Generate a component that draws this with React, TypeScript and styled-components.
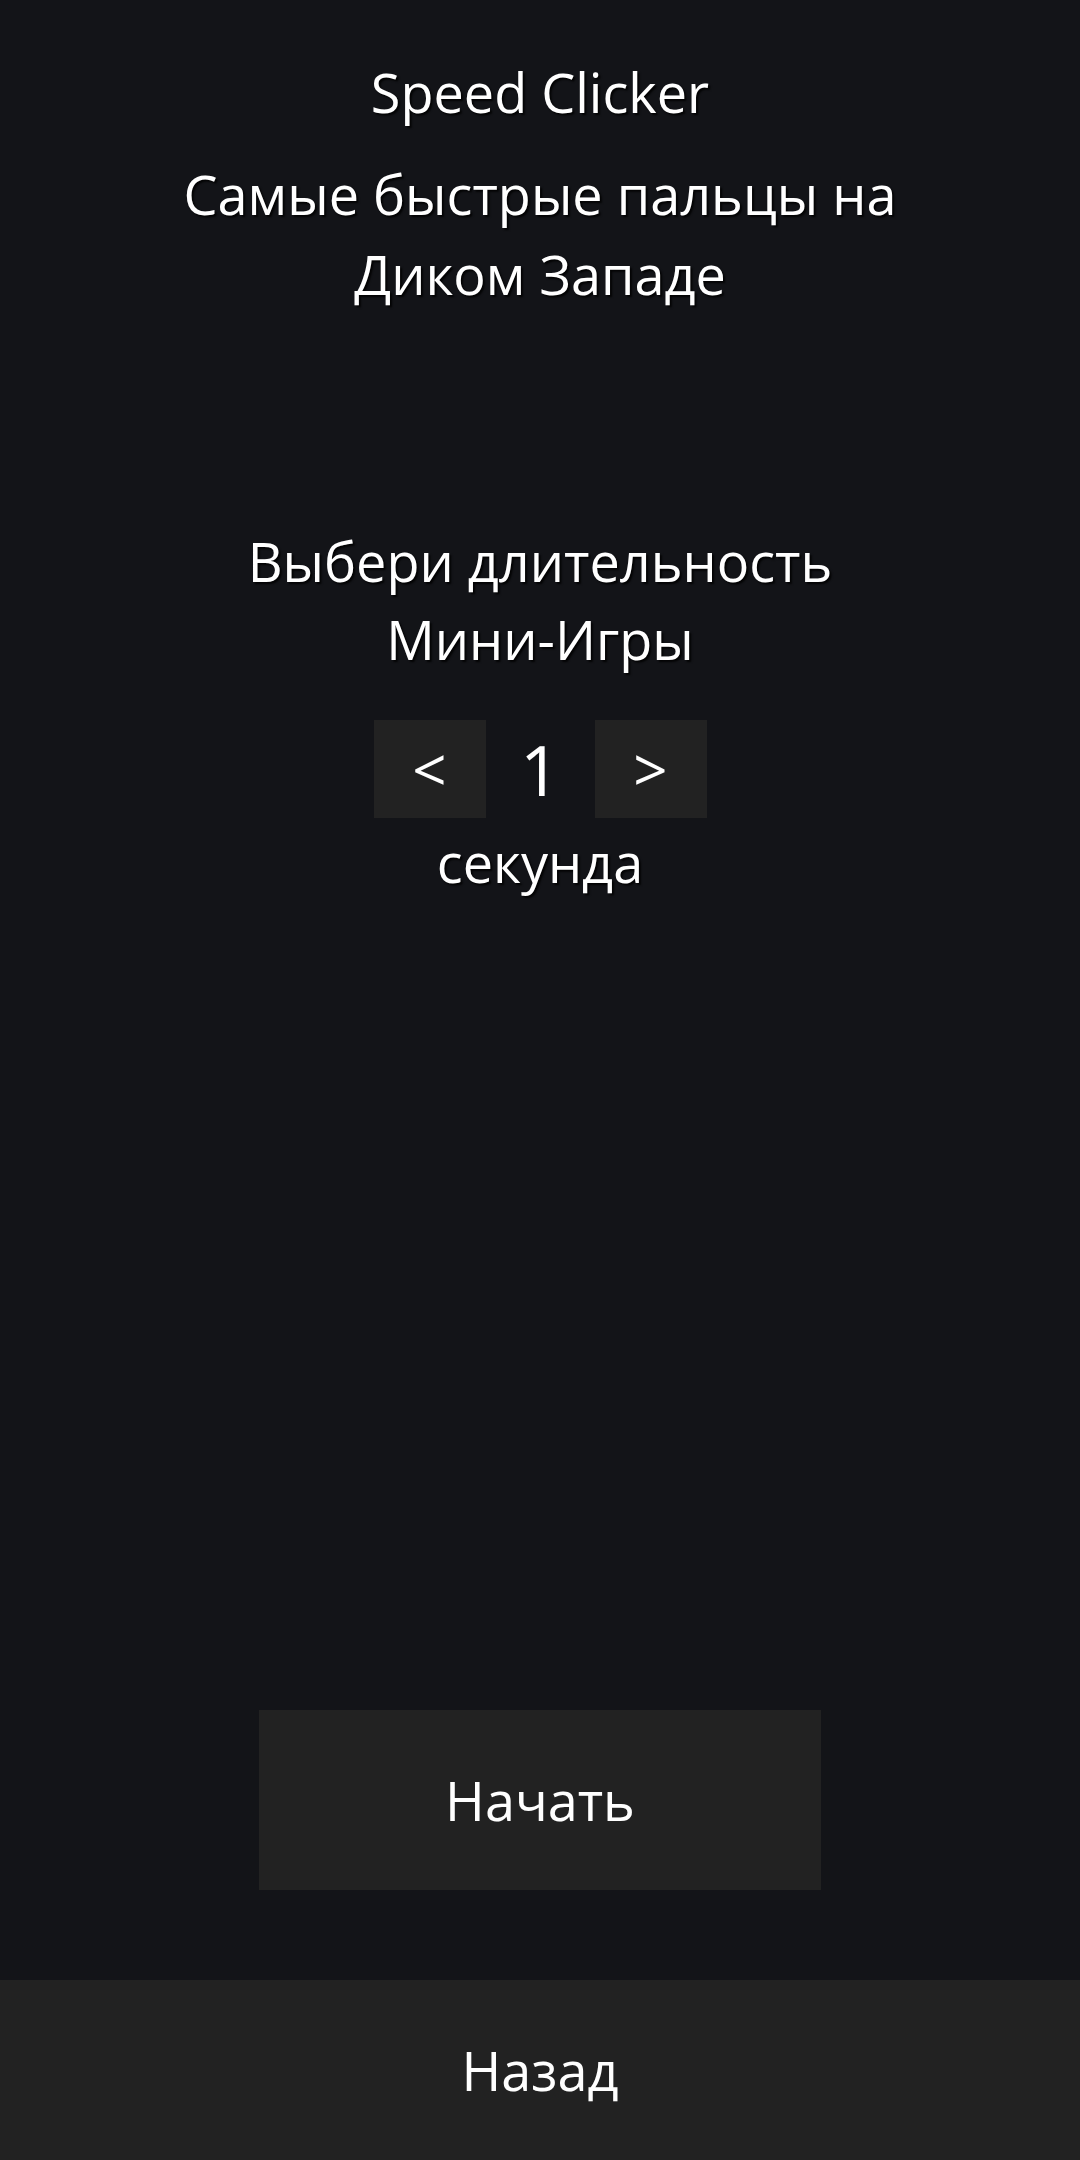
import React, {useState} from 'react';
import styled, {createGlobalStyle} from "styled-components";

const GlobalStyle = createGlobalStyle`
  html, body {
    margin: 0;
    padding: 0;
    background-color: #131418;
  }

  #root {
    min-height: 100vh;
  }
`

const Screen = styled.div`
  min-height: 100vh;
  display: flex;
  flex-flow: column;
  align-items: center;
  background-color: #131418;
  color: #ffffff;
  font-family: "Open Sans", "Noto Sans", sans-serif;
  font-size: 54px;
  user-select: none;
`

const Title = styled.div`
  margin-top: 55px;
  line-height: 74px;
  text-align: center;
  text-shadow: 2px 2px 2px rgba(0, 0, 0, 0.85);
`

const Subtitle = styled.div`
  margin-top: 25px;
  width: 760px;
  line-height: 80px;
  text-align: center;
  text-shadow: 2px 2px 2px rgba(0, 0, 0, 0.85);
`

const Prompt = styled.div`
  margin-top: 208px;
  line-height: 78px;
  text-align: center;
  text-shadow: 2px 2px 2px rgba(0, 0, 0, 0.85);
`

const Selector = styled.div`
  margin-top: 42px;
  display: flex;
  flex-flow: row;
  align-items: center;
`

const ArrowButton = styled.button`
  width: 112px;
  height: 98px;
  padding: 0;
  border: none;
  background-color: #222222;
  color: #ffffff;
  font-family: inherit;
  font-size: 60px;
  line-height: 98px;
  cursor: pointer;
`

const Value = styled.div`
  width: 109px;
  font-size: 70px;
  line-height: 98px;
  text-align: center;
`

const Unit = styled.div`
  margin-top: 5px;
  line-height: 78px;
  text-align: center;
  text-shadow: 2px 2px 2px rgba(0, 0, 0, 0.85);
`

const Spacer = styled.div`
  flex-grow: 1;
`

const StartButton = styled.button`
  width: 562px;
  height: 180px;
  margin-bottom: 90px;
  border: none;
  background-color: #222222;
  color: #ffffff;
  font-family: inherit;
  font-size: 54px;
  cursor: pointer;
`

const BackBar = styled.button`
  width: 100%;
  height: 180px;
  border: none;
  background-color: #222222;
  color: #ffffff;
  font-family: inherit;
  font-size: 54px;
  cursor: pointer;
`

function secondsWord(n: number) {
    const mod10 = n % 10
    const mod100 = n % 100
    if (mod10 === 1 && mod100 !== 11) return 'секунда'
    if (mod10 >= 2 && mod10 <= 4 && (mod100 < 12 || mod100 > 14)) return 'секунды'
    return 'секунд'
}

function App() {
    const [duration, setDuration] = useState<number>(1)

    const handlePrev = () => {
        setDuration(d => Math.max(1, d - 1))
    }

    const handleNext = () => {
        setDuration(d => Math.min(60, d + 1))
    }

    return (
        <>
            <GlobalStyle/>
            <Screen>
                <Title>Speed Clicker</Title>
                <Subtitle>Самые быстрые пальцы на Диком Западе</Subtitle>
                <Prompt>Выбери длительность<br/>Мини-Игры</Prompt>
                <Selector>
                    <ArrowButton onClick={handlePrev}>&lt;</ArrowButton>
                    <Value>{duration}</Value>
                    <ArrowButton onClick={handleNext}>&gt;</ArrowButton>
                </Selector>
                <Unit>{secondsWord(duration)}</Unit>
                <Spacer/>
                <StartButton>Начать</StartButton>
                <BackBar>Назад</BackBar>
            </Screen>
        </>
    );
}

export default App;
